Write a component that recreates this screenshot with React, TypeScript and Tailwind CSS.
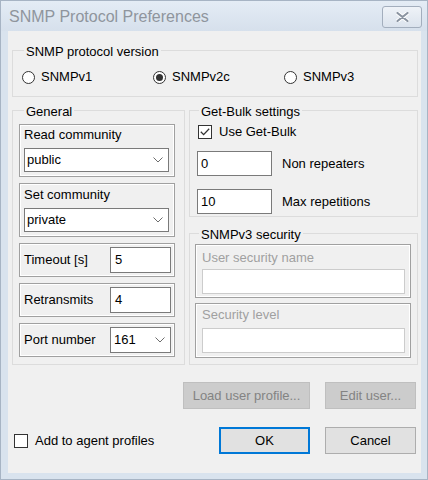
import React from "react";

function Chevron() {
  return (
    <svg width="10" height="6" viewBox="0 0 10 6" className="shrink-0">
      <polyline points="0.5,0.5 5,5 9.5,0.5" fill="none" stroke="#6d6d6d" strokeWidth="1" />
    </svg>
  );
}

function Combo({ value, className }: { value: string; className: string }) {
  return (
    <div className={`flex items-center justify-between bg-white border border-[#7a7a7a] pl-[2px] pr-[5px] ${className}`}>
      <span className="leading-[16px]">{value}</span>
      <Chevron />
    </div>
  );
}

function Field({ value, className, disabled }: { value?: string; className: string; disabled?: boolean }) {
  return (
    <div
      className={`flex items-center bg-white border pl-[3px] ${
        disabled ? "border-[#cccccc]" : "border-[#7a7a7a]"
      } ${className}`}
    >
      <span className="leading-[16px]">{value}</span>
    </div>
  );
}

function Radio({ label, checked }: { label: string; checked?: boolean }) {
  return (
    <div className="flex items-center gap-[6px] w-[131px] h-[16px]">
      <span className="flex items-center justify-center w-[13px] h-[13px] rounded-full border border-[#333333] bg-white">
        {checked && <span className="block w-[7px] h-[7px] rounded-full bg-[#333333]" />}
      </span>
      <span className="leading-[16px]">{label}</span>
    </div>
  );
}

function Check({ label, checked }: { label: string; checked?: boolean }) {
  return (
    <div className="flex items-center gap-[7px] h-[16px]">
      <span className="flex items-center justify-center w-[14px] h-[14px] border border-[#333333] bg-white">
        {checked && (
          <svg width="10" height="8" viewBox="0 0 10 8">
            <polyline points="0.8,3.8 3.6,6.6 9.2,0.8" fill="none" stroke="#333333" strokeWidth="1.3" />
          </svg>
        )}
      </span>
      <span className="leading-[16px]">{label}</span>
    </div>
  );
}

function Btn({
  label,
  width,
  disabled,
  primary,
}: {
  label: string;
  width: string;
  disabled?: boolean;
  primary?: boolean;
}) {
  const look = disabled
    ? "bg-[#cccccc] border border-[#bfbfbf] text-[#838383]"
    : primary
      ? "bg-[#e1e1e1] border-2 border-[#0078d7]"
      : "bg-[#e1e1e1] border border-[#adadad]";
  return <div className={`flex items-center justify-center h-[27px] ${width} ${look}`}>{label}</div>;
}

function Group({
  title,
  legendGap,
  className,
  children,
}: {
  title: string;
  legendGap: string;
  className?: string;
  children: React.ReactNode;
}) {
  return (
    <fieldset className={`border border-[#dcdcdc] min-w-0 ${className ?? ""}`}>
      <legend className={`${legendGap} px-[2px] pt-[4px] leading-[16px]`}>{title}</legend>
      {children}
    </fieldset>
  );
}

// etched inner frame used for the labelled boxes
const etched = "border border-[#a0a0a0] shadow-[inset_1px_1px_0_#ffffff,inset_-1px_-1px_0_#ffffff]";

export default function App() {
  return (
    <div className="w-[428px] h-[480px] flex flex-col bg-[#d9e3ee] border border-[#a7b4c4] text-[13px] text-black [font-family:'Liberation_Sans',Arial,sans-serif]">
      {/* title bar */}
      <div className="h-[30px] flex items-center justify-between pl-[8px] pr-[5px] bg-gradient-to-b from-[#e4ecf5] to-[#d6e0ec]">
        <span className="text-[16px] leading-[20px] text-[#8f959d] mt-[2px]">SNMP Protocol Preferences</span>
        <div className="w-[40px] h-[22px] mt-[2px] flex items-center justify-center rounded-[3px] border border-[#a3aebd] bg-gradient-to-b from-[#eff3f8] to-[#dbe3ed]">
          <svg width="13" height="10" viewBox="0 0 13 10">
            <path d="M1.5 1 L11.5 9 M11.5 1 L1.5 9" stroke="#ffffff" strokeWidth="4" strokeLinecap="round" />
            <path d="M1.5 1 L11.5 9 M11.5 1 L1.5 9" stroke="#8a94a1" strokeWidth="2.2" strokeLinecap="round" />
          </svg>
        </div>
      </div>

      {/* client area */}
      <div className="flex-1 ml-[7px] mr-[6px] mb-[6px] bg-[#f0f0f0] pl-[4px] pr-[3px] pt-[9px]">
        <Group title="SNMP protocol version" legendGap="ml-[11px]">
          <div className="flex pl-[9px] pt-[9px] pb-[11px]">
            <Radio label="SNMPv1" />
            <Radio label="SNMPv2c" checked />
            <Radio label="SNMPv3" />
          </div>
        </Group>

        <div className="flex mt-[3px] gap-[4px]">
          <Group title="General" legendGap="ml-[11px]" className="w-[173px] shrink-0">
            <div className="flex flex-col gap-[6px] pl-[6px] pt-[4px] pb-[7px]">
              <div className={`w-[156px] px-[4px] pt-[2px] pb-[4px] ${etched}`}>
                <div className="leading-[16px]">Read community</div>
                <Combo value="public" className="mt-[5px] h-[24px] w-[145px]" />
              </div>
              <div className={`w-[156px] px-[4px] pt-[3px] pb-[4px] ${etched}`}>
                <div className="leading-[16px]">Set community</div>
                <Combo value="private" className="mt-[5px] h-[24px] w-[145px]" />
              </div>
              <div className={`w-[156px] h-[34px] flex items-center justify-between pl-[4px] pr-[3px] ${etched}`}>
                <span className="leading-[16px]">Timeout [s]</span>
                <Field value="5" className="w-[61px] h-[26px] pl-[4px]" />
              </div>
              <div className={`w-[156px] h-[34px] flex items-center justify-between pl-[4px] pr-[3px] ${etched}`}>
                <span className="leading-[16px]">Retransmits</span>
                <Field value="4" className="w-[61px] h-[26px] pl-[4px]" />
              </div>
              <div className={`w-[156px] h-[34px] flex items-center justify-between pl-[4px] pr-[3px] ${etched}`}>
                <span className="leading-[16px]">Port number</span>
                <Combo value="161" className="w-[61px] h-[26px] pl-[3px]" />
              </div>
            </div>
          </Group>

          <div className="flex-1 flex flex-col min-w-0">
            <Group title="Get-Bulk settings" legendGap="ml-[9px]">
              <div className="flex flex-col pl-[7px] pt-[4px] pb-[2px]">
                <div className="ml-[1px]">
                  <Check label="Use Get-Bulk" checked />
                </div>
                <div className="flex items-center mt-[11px]">
                  <Field value="0" className="w-[75px] h-[25px]" />
                  <span className="ml-[10px] leading-[16px]">Non repeaters</span>
                </div>
                <div className="flex items-center mt-[13px]">
                  <Field value="10" className="w-[75px] h-[25px]" />
                  <span className="ml-[10px] leading-[16px]">Max repetitions</span>
                </div>
              </div>
            </Group>

            <Group title="SNMPv3 security" legendGap="ml-[9px]" className="mt-[6px]">
              <div className="flex flex-col gap-[5px] pl-[5px] pr-[6px] pt-[1px] pb-[6px]">
                <div className={`pl-[6px] pr-[5px] pt-[5px] pb-[3px] ${etched}`}>
                  <div className="leading-[16px] text-[#a0a0a0]">User security name</div>
                  <Field disabled className="mt-[3px] h-[25px]" />
                </div>
                <div className={`pl-[6px] pr-[5px] pt-[3px] pb-[4px] ${etched}`}>
                  <div className="leading-[16px] text-[#a0a0a0]">Security level</div>
                  <Field disabled className="mt-[5px] h-[25px]" />
                </div>
              </div>
            </Group>
          </div>
        </div>

        <div className="flex justify-end gap-[15px] mt-[17px] mr-[2px]">
          <Btn label="Load user profile..." width="w-[127px]" disabled />
          <Btn label="Edit user..." width="w-[91px]" disabled />
        </div>

        <div className="flex items-center mt-[18px] mr-[2px]">
          <div className="ml-[2px]">
            <Check label="Add to agent profiles" />
          </div>
          <div className="ml-auto flex gap-[15px]">
            <Btn label="OK" width="w-[91px]" primary />
            <Btn label="Cancel" width="w-[91px]" />
          </div>
        </div>
      </div>
    </div>
  );
}
